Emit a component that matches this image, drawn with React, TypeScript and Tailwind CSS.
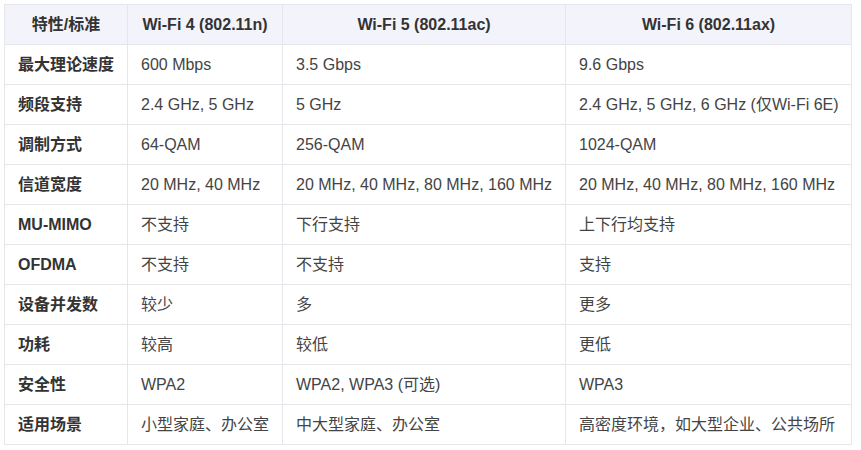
const headers = ['特性/标准', 'Wi-Fi 4 (802.11n)', 'Wi-Fi 5 (802.11ac)', 'Wi-Fi 6 (802.11ax)']

const rows: string[][] = [
  ['最大理论速度', '600 Mbps', '3.5 Gbps', '9.6 Gbps'],
  ['频段支持', '2.4 GHz, 5 GHz', '5 GHz', '2.4 GHz, 5 GHz, 6 GHz (仅Wi-Fi 6E)'],
  ['调制方式', '64-QAM', '256-QAM', '1024-QAM'],
  ['信道宽度', '20 MHz, 40 MHz', '20 MHz, 40 MHz, 80 MHz, 160 MHz', '20 MHz, 40 MHz, 80 MHz, 160 MHz'],
  ['MU-MIMO', '不支持', '下行支持', '上下行均支持'],
  ['OFDMA', '不支持', '不支持', '支持'],
  ['设备并发数', '较少', '多', '更多'],
  ['功耗', '较高', '较低', '更低'],
  ['安全性', 'WPA2', 'WPA2, WPA3 (可选)', 'WPA3'],
  ['适用场景', '小型家庭、办公室', '中大型家庭、办公室', '高密度环境，如大型企业、公共场所'],
]

const widths = ['w-[123px]', 'w-[155px]', 'w-[283px]', 'w-[286px]']

export default function App() {
  return (
    <div className="bg-white min-h-screen p-[4px] font-['Liberation_Sans','Noto_Sans_CJK_SC',sans-serif] text-[16px]">
      <table className="border-collapse table-fixed w-[847px]">
        <thead>
          <tr className="bg-[#f3f3fb]">
            {headers.map((h, i) => (
              <th
                key={h}
                className={`${widths[i]} h-[40px] border border-[#e6e6ea] text-center font-bold text-[#333] px-2`}
              >
                {h}
              </th>
            ))}
          </tr>
        </thead>
        <tbody>
          {rows.map((r) => (
            <tr key={r[0]}>
              {r.map((c, i) => (
                <td
                  key={i}
                  className={`h-[40px] border border-[#e6e6ea] pl-[13px] pr-1 whitespace-nowrap ${
                    i === 0 ? 'font-bold text-[#333]' : 'text-[#444]'
                  }`}
                >
                  {c}
                </td>
              ))}
            </tr>
          ))}
        </tbody>
      </table>
    </div>
  )
}
